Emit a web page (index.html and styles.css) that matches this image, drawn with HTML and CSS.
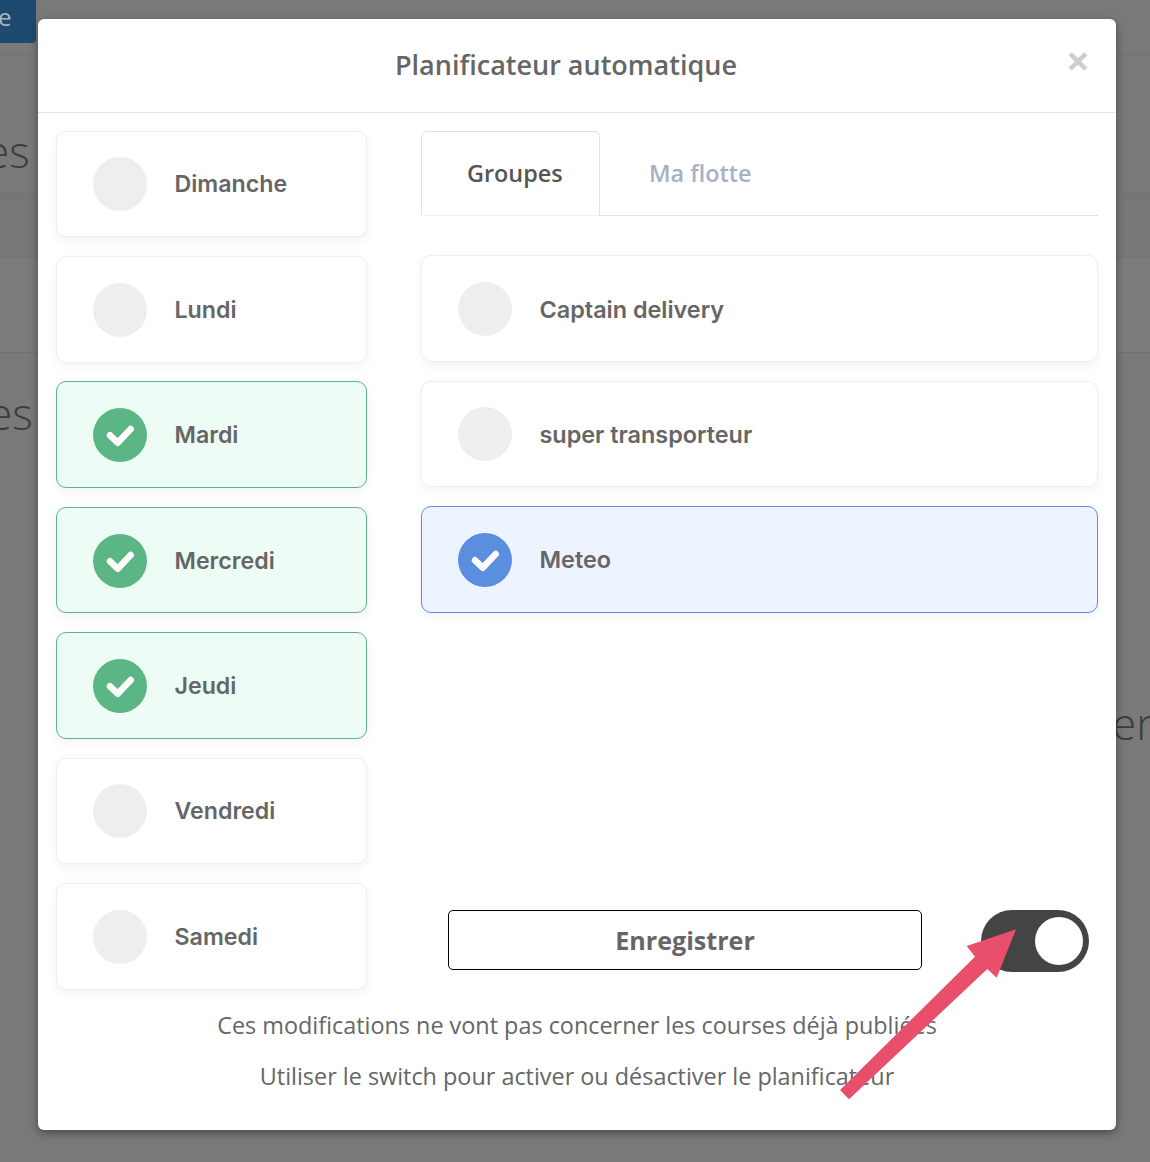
FILE: index.html
```html
<!DOCTYPE html>
<html lang="fr">
<head>
<meta charset="utf-8">
<title>Planificateur automatique</title>
<link rel="stylesheet" href="styles.css">
</head>
<body>
<div class="page">
  <div class="top-row"><span class="page-btn">e</span></div>
  <div class="bg-row bg-title"><span class="bg-word">es</span></div>
  <div class="bg-row bg-strip"></div>
  <div class="bg-row bg-head"></div>
  <div class="bg-row bg-section"><span class="bg-word bg-word-b">es</span></div>
  <span class="bg-right">er</span>
</div>
<div class="modal">
  <header class="modal-head">
    <h1 class="modal-title">Planificateur automatique</h1>
    <span class="close">×</span>
  </header>
  <div class="modal-body">
    <div class="columns">
      <div class="days">
        <div class="card"><span class="dot"></span><span class="label">Dimanche</span></div>
        <div class="card"><span class="dot"></span><span class="label">Lundi</span></div>
        <div class="card green"><span class="dot"><svg class="tick" viewBox="0 0 28 22"><path d="M4 11.3 11.7 18.7 24.7 5"/></svg></span><span class="label">Mardi</span></div>
        <div class="card green"><span class="dot"><svg class="tick" viewBox="0 0 28 22"><path d="M4 11.3 11.7 18.7 24.7 5"/></svg></span><span class="label">Mercredi</span></div>
        <div class="card green"><span class="dot"><svg class="tick" viewBox="0 0 28 22"><path d="M4 11.3 11.7 18.7 24.7 5"/></svg></span><span class="label">Jeudi</span></div>
        <div class="card"><span class="dot"></span><span class="label">Vendredi</span></div>
        <div class="card"><span class="dot"></span><span class="label">Samedi</span></div>
      </div>
      <div class="side">
        <nav class="tabs">
          <span class="tab active">Groupes</span>
          <span class="tab">Ma flotte</span>
        </nav>
        <div class="groups">
          <div class="card"><span class="dot"></span><span class="label">Captain delivery</span></div>
          <div class="card"><span class="dot"></span><span class="label">super transporteur</span></div>
          <div class="card blue"><span class="dot"><svg class="tick" viewBox="0 0 28 22"><path d="M4 11.3 11.7 18.7 24.7 5"/></svg></span><span class="label">Meteo</span></div>
        </div>
        <div class="actions">
          <button class="save" type="button">Enregistrer</button>
          <span class="switch"><span class="knob"></span></span>
        </div>
      </div>
    </div>
    <p class="note first">Ces modifications ne vont pas concerner les courses déjà publiées</p>
    <p class="note">Utiliser le switch pour activer ou désactiver le planificateur</p>
  </div>
</div>
<svg class="arrow" viewBox="0 0 190 190"><polygon points="176,6.3 126.7,23 135,33.7 0,167 9,176.3 147.3,46 156.7,54.7"/></svg>
</body>
</html>
```
FILE: styles.css
```css
* { box-sizing: border-box; }
html, body { margin: 0; height: 100%; }
body {
  position: relative;
  width: 1150px;
  height: 1162px;
  overflow: hidden;
  background: #797979;
  font-family: "Open Sans", sans-serif;
}
.page { position: relative; height: 1162px; }
.top-row { height: 55px; border-bottom: 1px solid #717171; }
.page-btn {
  display: block;
  width: 36px;
  height: 43px;
  background: #1f4a70;
  border-radius: 0 0 4px 0;
  color: #a8b6c4;
  font-size: 24px;
  line-height: 34px;
  overflow: hidden;
  text-indent: -2px;
}
.bg-row { position: relative; border-bottom: 1px solid #717171; }
.bg-title { height: 139px; }
.bg-strip { height: 64px; background: #777; }
.bg-head { height: 95px; background: #7b7b7b; }
.bg-section { height: 200px; border-bottom: 0; }
.bg-word {
  position: absolute;
  left: -15px;
  top: 71px;
  font-size: 44px;
  line-height: 50px;
  color: #3c3c3c;
  font-weight: 300;
}
.bg-word-b { top: 35px; left: -12px; }
.bg-right {
  position: absolute;
  left: 1112px;
  top: 698px;
  font-size: 44px;
  line-height: 50px;
  font-weight: 300;
  color: #3c3c3c;
}
.modal {
  position: absolute;
  left: 38px;
  top: 19px;
  width: 1078px;
  height: 1111px;
  background: #fff;
  border-radius: 6px;
  box-shadow: 0 3px 9px rgba(0, 0, 0, .4);
  color: #666;
}
.modal-head {
  position: relative;
  height: 94px;
  border-bottom: 1px solid #e5e5e5;
  display: flex;
  justify-content: center;
  padding-top: 25px;
  padding-right: 22px;
}
.modal-title {
  margin: 0;
  font-size: 27px;
  line-height: 42px;
  font-weight: 600;
  color: #666;
}
.close {
  position: absolute;
  right: 26px;
  top: 18px;
  font-size: 42px;
  line-height: 46px;
  font-weight: 700;
  color: #cecece;
}
.modal-body { padding: 17.55px 18px 0; }
.columns { display: flex; gap: 54px; }
.days {
  width: 311px;
  display: flex;
  flex-direction: column;
  gap: 18.85px;
}
.side {
  width: 677px;
  display: flex;
  flex-direction: column;
}
.card {
  height: 106.6px;
  flex: none;
  display: flex;
  align-items: center;
  padding-left: 36px;
  padding-top: 0.7px;
  gap: 27.5px;
  background: #fff;
  border: 1px solid #eee;
  border-radius: 10px;
  box-shadow: 0 4px 12px rgba(0, 0, 0, .05);
}
.dot {
  width: 54px;
  height: 54px;
  flex: none;
  border-radius: 50%;
  background: #eee;
  display: flex;
  align-items: center;
  justify-content: center;
}
.label {
  font-family: Inter, sans-serif;
  font-size: 23.2px;
  font-weight: 600;
  color: #666;
}
.groups .label { font-size: 23.4px; }
.tick { width: 28px; height: 22px; overflow: visible; }
.tick path {
  fill: none;
  stroke: #fff;
  stroke-width: 6.5;
  stroke-linecap: round;
  stroke-linejoin: round;
}
.green { background: #edfdf5; border-color: #5cb585; }
.green .dot { background: #5cb585; }
.blue { background: #edf4ff; border-color: #5b8ede; }
.blue .dot { background: #5b8ede; }
.tabs {
  display: flex;
  height: 85px;
  border-bottom: 1px solid #dee2e6;
}
.tab {
  height: 85px;
  padding: 0 0 1px 48px;
  display: flex;
  align-items: center;
  font-size: 23.4px;
  font-weight: 600;
  color: #a7b0c4;
  border: 1px solid transparent;
  border-radius: 6px 6px 0 0;
}
.tab.active {
  width: 179px;
  padding-left: 45px;
  color: #555;
  background: #fff;
  border-color: #dee2e6 #dee2e6 #f0f0f0;
}
.groups {
  display: flex;
  flex-direction: column;
  gap: 18.8px;
  margin-top: 39.85px;
}
.actions {
  display: flex;
  align-items: flex-start;
  margin-top: 297.2px;
  padding-left: 27px;
  gap: 59px;
}
.save {
  width: 474px;
  height: 60px;
  background: #fff;
  border: 1px solid #000;
  border-radius: 5px;
  font-family: "Open Sans", sans-serif;
  font-size: 25.1px;
  font-weight: 700;
  color: #666;
}
.switch {
  width: 108px;
  height: 62px;
  border-radius: 31px;
  background: #444;
  display: flex;
  align-items: center;
  justify-content: flex-end;
  padding-right: 6px;
}
.knob {
  width: 48px;
  height: 48px;
  border-radius: 50%;
  background: #fff;
}
.note {
  margin: 0;
  text-align: center;
  font-size: 23.4px;
  line-height: 32px;
  color: #666;
}
.note.first { margin-top: 19.2px; margin-bottom: 19px; }
.arrow {
  position: absolute;
  left: 840px;
  top: 923px;
  width: 190px;
  height: 190px;
}
.arrow polygon { fill: #e94f6a; }
```
